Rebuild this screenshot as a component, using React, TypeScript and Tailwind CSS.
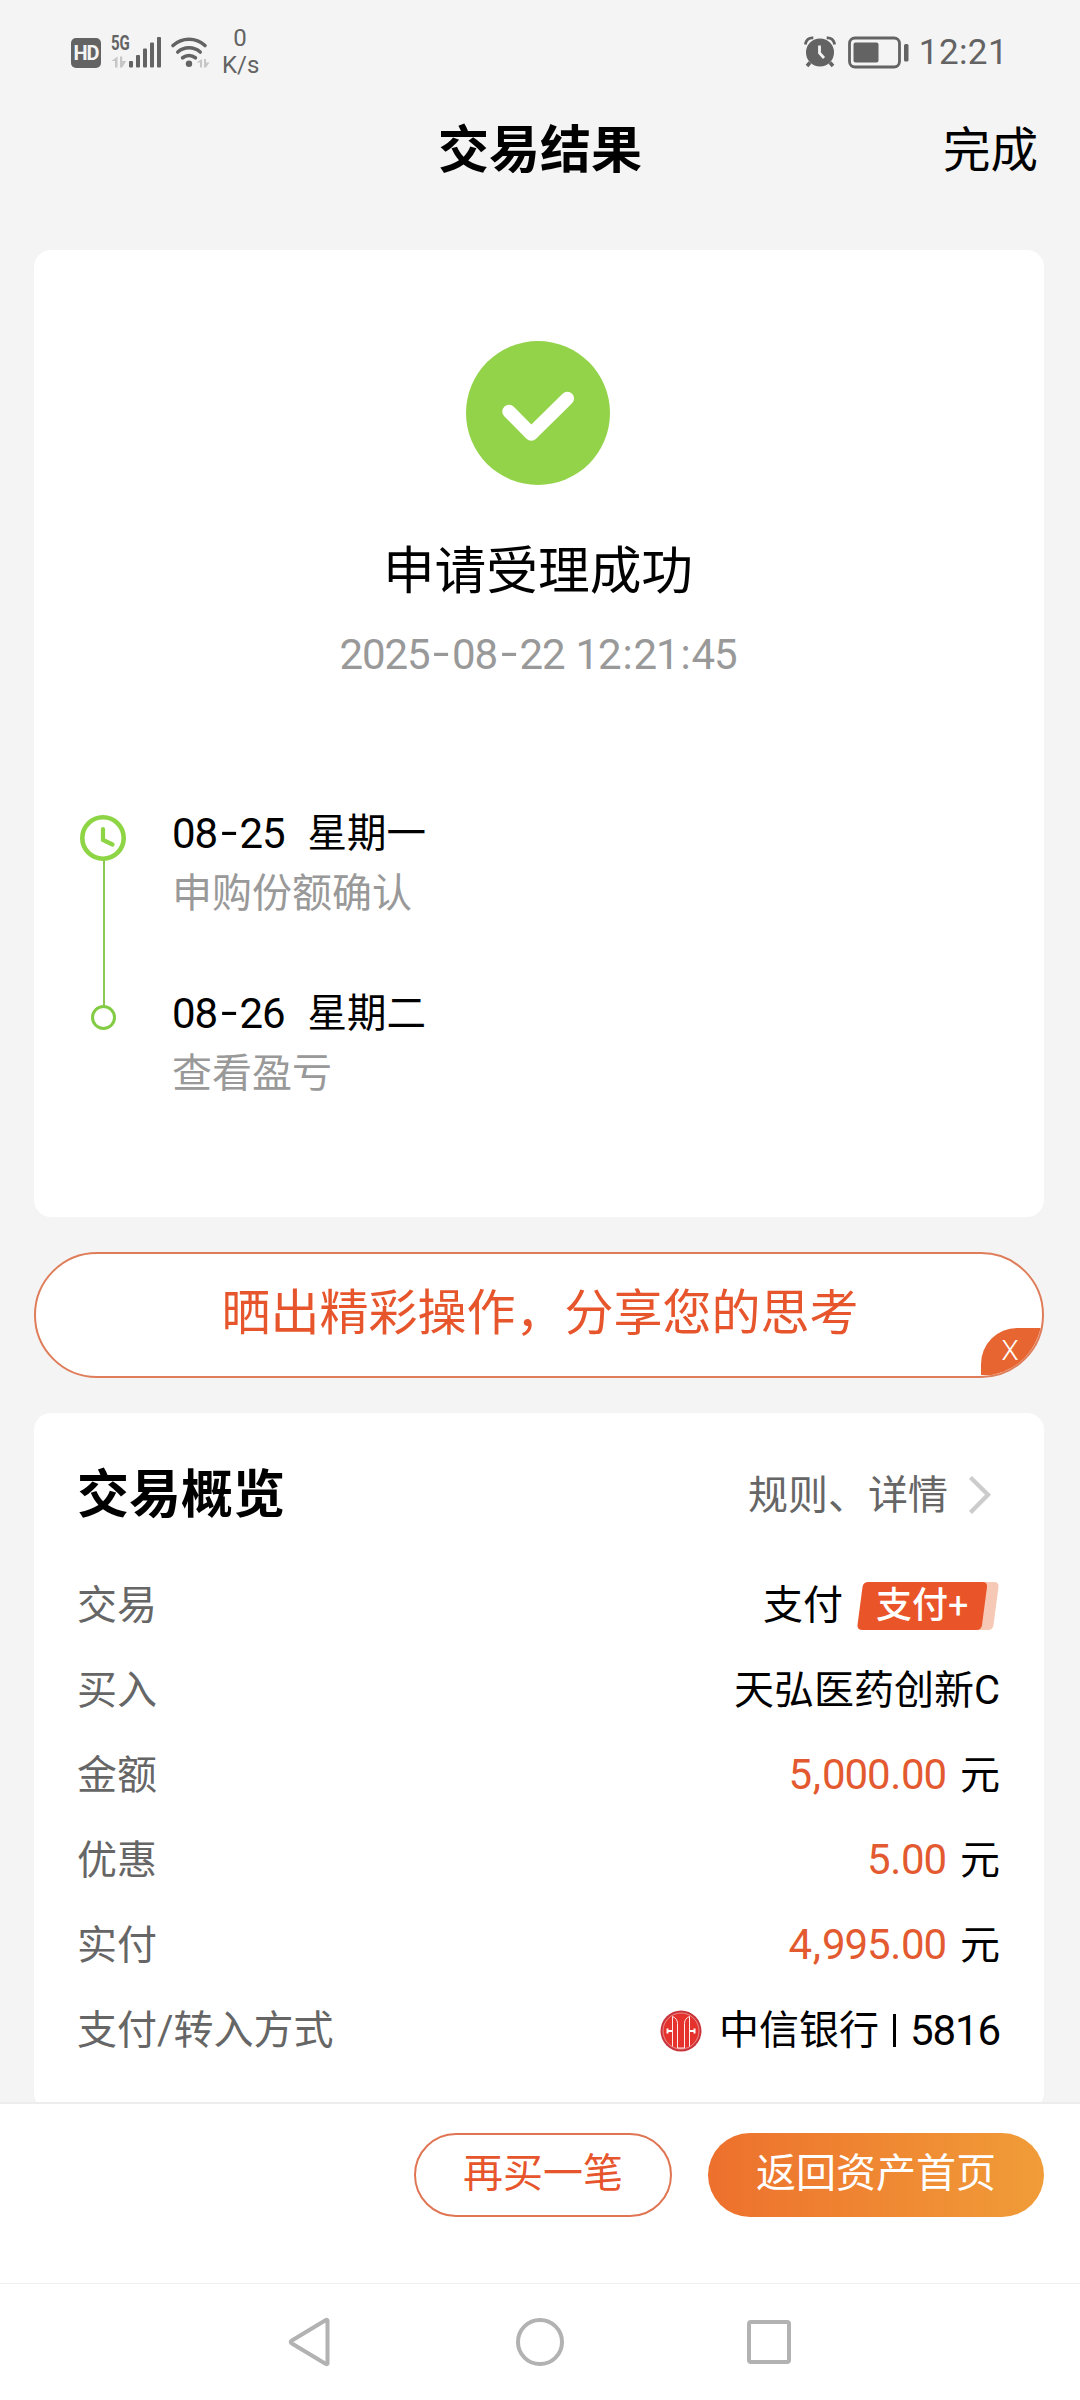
import type { ReactNode } from 'react';

const schedule = [
  { date: '08-25', weekday: '星期一', note: '申购份额确认' },
  { date: '08-26', weekday: '星期二', note: '查看盈亏' },
];

// separators get a fixed advance, the dash is as wide as a digit
const separators: Record<string, string> = {
  '-': 'inline-block w-[22.500px] -translate-y-[2px] scale-x-140 text-center',
  ':': 'inline-block w-[13px] text-center',
  '.': 'inline-block w-[11.500px] text-center',
  ',': 'inline-block w-[11px] text-center',
};

function Digits({ value }: { value: string }) {
  return (
    <span className="text-[42px] tracking-[-1.100px]">
      {value.split('').map((c, i) => (
        <span key={i} className={separators[c]}>
          {c}
        </span>
      ))}
    </span>
  );
}

function Amount({ value }: { value: string }) {
  return (
    <span className="flex items-baseline">
      <span className="text-[#e35a30]">
        <Digits value={value} />
      </span>
      <span className="ml-[14px]">元</span>
    </span>
  );
}

function Row({ label, children }: { label: string; children: ReactNode }) {
  return (
    <div className="flex h-[85px] items-center justify-between">
      <span className="text-[#666]">{label}</span>
      <div className="flex items-center text-black">{children}</div>
    </div>
  );
}

function StatusBar() {
  return (
    <div className="flex h-[100px] shrink-0 items-start justify-between pl-[71px] pr-[72px] text-[#636363]">
      <div className="flex items-start">
        <div className="mt-[38px] flex h-[30px] w-[30px] items-center justify-center rounded-[5px] bg-[#636363] text-[20px] leading-none font-bold tracking-[-1px] text-[#f4f4f4]">
          HD
        </div>
        <div className="mt-[34px] ml-[10px] w-[18px]">
          <div className="origin-left scale-x-75 text-[20px] leading-[19px] font-bold">5G</div>
          <svg className="mt-[3px]" width="16" height="12" viewBox="0 0 16 12" fill="#c6c6c6">
            <path d="M6.500 0.500v11h-2.500v-6.500h-3.500zM9 0.500h2.200v4.500h4l-4 6.500h-2.200z" />
          </svg>
        </div>
        <svg className="mt-[36px]" width="33" height="32" viewBox="0 0 33 32" fill="#636363">
          <rect x="0" y="25" width="4" height="6.500" rx="1" />
          <rect x="7" y="19" width="4" height="12.500" rx="1" />
          <rect x="14" y="12.500" width="4" height="19" rx="1" />
          <rect x="21" y="6.500" width="4" height="25" rx="1" />
          <rect x="28" y="1" width="4" height="30.500" rx="1" />
        </svg>
        <svg className="mt-[34px] ml-[8px]" width="40" height="35" viewBox="0 0 40 35" fill="none">
          <g stroke="#636363" strokeWidth="3.600" strokeLinecap="round">
            <path d="M3 11.500a23.500 23.500 0 0 1 32 0" />
            <path d="M7.800 18a17 17 0 0 1 22.400 0" />
            <path d="M12.600 23.800a10.500 10.500 0 0 1 12.800 0" />
          </g>
          <circle cx="19" cy="29.700" r="3.200" fill="#636363" />
          <path d="M32 25v8.500h-2v-5h-3.500zM34 25h2v3.500h3.500l-3.500 5h-2z" fill="#c6c6c6" />
        </svg>
        <div className="mt-[25px] ml-[12px] w-[36px] text-center text-[24px] leading-[27px]">
          <div>0</div>
          <div>K/s</div>
        </div>
      </div>
      <div className="flex items-start">
        <svg className="mt-[36px]" width="32" height="32" viewBox="0 0 32 32" fill="none">
          <circle cx="16" cy="16.500" r="14" fill="#636363" />
          <path d="M15.500 9.500v7.500l4.500 5" stroke="#f4f4f4" strokeWidth="2.800" />
          <path d="M1.300 8.500q1.500-7 8-6.500M30.700 8.500q-1.500-7-8-6.500" stroke="#636363" strokeWidth="2.800" />
          <path d="M6 26.500l-3 3.500M26 26.500l3 3.500" stroke="#636363" strokeWidth="3.500" />
        </svg>
        <svg className="mt-[36px] ml-[12px]" width="61" height="33" viewBox="0 0 61 33" fill="none">
          <rect x="1.500" y="2" width="50" height="29" rx="5.500" stroke="#636363" strokeWidth="2.800" />
          <rect x="5.500" y="6.500" width="25" height="20" rx="2" fill="#636363" />
          <rect x="56" y="8" width="4.500" height="17.500" rx="1.500" fill="#636363" />
        </svg>
        <span className="mt-[33px] ml-[10px] text-[35px] leading-[40px] tracking-[0.400px]">12:21</span>
      </div>
    </div>
  );
}

function BankLogo() {
  return (
    <svg width="42" height="42" viewBox="0 0 42 42" fill="none">
      <circle cx="21" cy="21" r="20.500" fill="#c9343a" />
      <circle cx="21" cy="21" r="18" fill="#e5322d" stroke="#f3b3b0" strokeWidth="0.700" />
      <g stroke="#fff" strokeWidth="0.900">
        <path d="M12.500 6.500q5 2 5 7v24.500M29.500 6.500q-5 2-5 7v24.500" />
        <path d="M12.500 6.500v30M29.500 6.500v30" />
        <path d="M17.500 38h7" />
      </g>
      <path d="M7.500 18.500v5M12 21h-4M34.500 18.500v5M30 21h4" stroke="#fff" strokeWidth="2" />
    </svg>
  );
}

function ResultCard() {
  return (
    <section className="flex h-[967px] shrink-0 flex-col items-center rounded-[17px] bg-white pt-[91px] pr-[2px]">
      <svg width="144" height="144" viewBox="0 0 144 144" fill="none">
        <circle cx="72" cy="72" r="72" fill="#93d34a" />
        <path d="M43 70.500l22.300 22.500 36-35.500" stroke="#fff" strokeWidth="13.500" strokeLinecap="round" strokeLinejoin="round" />
      </svg>
      <h2 className="mt-[57px] text-[51.700px] leading-[60px] text-black">申请受理成功</h2>
      <p className="mt-[28px] flex h-[50px] items-center gap-[11px] leading-[50px] text-[#999]">
        <Digits value="2025-08-22" />
        <Digits value="12:21:45" />
      </p>
      <div className="mt-[124px] flex self-start pl-[46px]">
        <svg className="mt-[11px]" width="46" height="215" viewBox="0 0 46 215" fill="none">
          <path d="M24 45v146" stroke="#8cc653" strokeWidth="2" />
          <circle cx="23" cy="23" r="20.700" stroke="#8dd544" strokeWidth="4.600" />
          <path d="M23 14v11l9.500 4.500" stroke="#8dd544" strokeWidth="4.200" strokeLinecap="round" />
          <circle cx="23.500" cy="202.500" r="11" stroke="#82cc44" strokeWidth="3" />
        </svg>
        <div className="ml-[46px] flex flex-col gap-[60px] text-[40px] leading-[60px]">
          {schedule.map((s) => (
            <div key={s.date}>
              <div className="flex h-[60px] items-center text-black">
                <Digits value={s.date} />
                <span className="ml-[23px] text-[39.500px]">{s.weekday}</span>
              </div>
              <div className="h-[60px] text-[#999]">{s.note}</div>
            </div>
          ))}
        </div>
      </div>
    </section>
  );
}

function ShareBanner() {
  return (
    <div className="relative flex h-[126px] shrink-0 items-center justify-center overflow-hidden rounded-full border-2 border-[#df7d5a] bg-white pb-[3px] pl-[2px] text-[49px] leading-[60px] text-[#e6552c]">
      晒出精彩操作，分享您的思考
      <span className="absolute right-0 bottom-[1px] flex h-[47px] w-[61px] justify-center rounded-tl-[36px] bg-[#e76530] pr-[3px] pt-[2px] text-[28px] leading-[42px] font-light text-white">
        X
      </span>
    </div>
  );
}

function OverviewCard() {
  return (
    <section className="h-[697px] shrink-0 rounded-[17px] bg-white pt-[43px] pr-[44px] pl-[43px] text-[40px] leading-[60px]">
      <div className="mb-[27px] flex h-[80px] items-center justify-between">
        <h2 className="text-[52px] font-bold text-black">交易概览</h2>
        <div className="flex items-center pr-[8px] text-[#666]">
          规则、详情
          <svg className="mb-[2px] ml-[20px]" width="24" height="40" viewBox="0 0 24 40" fill="none">
            <path d="M2.500 2.500l17.500 17.300-17.500 17.700" stroke="#ccc" strokeWidth="4.300" />
          </svg>
        </div>
      </div>
      <Row label="交易">
        支付
        <span className="relative ml-[13px] flex h-[48px] w-[144px] items-center pl-[20px] text-[36px] leading-none font-medium text-white">
          <svg className="absolute inset-0" width="144" height="48" viewBox="0 0 144 48">
            <path d="M120 0h18q5 0 4.500 5l-5 38q-0.700 5-5.500 5h-18z" fill="#f6c9b6" />
            <path d="M12.500 0h114q5 0 4.500 5l-5 38q-0.700 5-5.500 5h-114q-5.500 0-5-5l5-38q0.700-5 6-5z" fill="#ea5429" />
          </svg>
          <span className="relative">
            支付<span className="font-normal">+</span>
          </span>
        </span>
      </Row>
      <Row label="买入">天弘医药创新C</Row>
      <Row label="金额">
        <Amount value="5,000.00" />
      </Row>
      <Row label="优惠">
        <Amount value="5.00" />
      </Row>
      <Row label="实付">
        <Amount value="4,995.00" />
      </Row>
      <Row label="支付/转入方式">
        <BankLogo />
        <span className="ml-[17px]">中信银行</span>
        <span className="mr-[14px] ml-[14px] h-[33px] w-[3px] bg-black" />
        <Digits value="5816" />
      </Row>
    </section>
  );
}

export default function App() {
  return (
    <div className="flex h-[2400px] w-[1080px] flex-col overflow-hidden bg-[#f4f4f4] font-[Roboto,'Noto_Sans_CJK_SC',sans-serif]">
      <StatusBar />
      <header className="grid h-[98px] shrink-0 grid-cols-3 items-center pt-[3px] pr-[42px] pl-[42px] text-black">
        <h1 className="col-start-2 text-center text-[51px] leading-[60px] font-bold">交易结果</h1>
        <button className="justify-self-end text-[47.500px] leading-[60px]">完成</button>
      </header>
      <main className="flex min-h-0 flex-1 flex-col gap-[35px] overflow-hidden pt-[52px] pr-[36px] pl-[34px]">
        <ResultCard />
        <ShareBanner />
        <OverviewCard />
      </main>
      <footer className="flex h-[181px] shrink-0 items-start justify-end gap-[36px] border-t-2 border-[#ededed] bg-white pt-[29px] pr-[36px] text-[40px]">
        <button className="h-[84px] w-[258px] rounded-full border-2 border-[#df7553] pb-[4px] leading-[78px] text-[#e6552c]">
          再买一笔
        </button>
        <button className="h-[84px] w-[336px] rounded-full bg-linear-to-r from-[#ed702d] to-[#f09c38] pb-[2px] leading-[82px] text-white">
          返回资产首页
        </button>
      </footer>
      <nav className="flex h-[117px] shrink-0 items-center justify-between border-t border-[#f0f0f0] bg-white pr-[288px] pl-[286px]">
        <svg width="46" height="50" viewBox="0 0 46 50" fill="none" stroke="#b2b2b2" strokeWidth="4" strokeLinejoin="round">
          <path d="M41.500 3.500v43q-0.500 1-2 0.300l-34-20.600q-1.500-1.200 0-2.400l34-20.600q1.500-0.700 2 0.300z" />
        </svg>
        <svg className="ml-[1px]" width="50" height="50" viewBox="0 0 50 50" fill="none">
          <circle cx="25" cy="25" r="22" stroke="#b2b2b2" strokeWidth="4" />
        </svg>
        <svg width="46" height="46" viewBox="0 0 46 46" fill="none">
          <rect x="3" y="3" width="40" height="40" rx="2" stroke="#b2b2b2" strokeWidth="4" />
        </svg>
      </nav>
    </div>
  );
}
